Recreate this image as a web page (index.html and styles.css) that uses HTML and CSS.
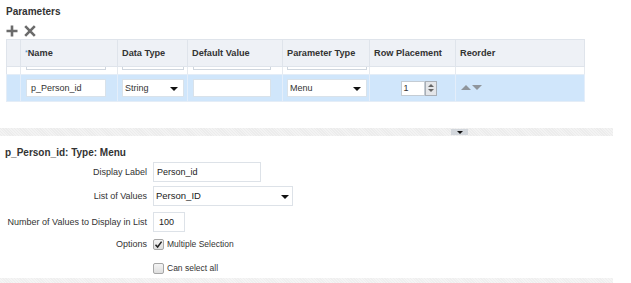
FILE: index.html
```html
<!DOCTYPE html>
<html>
<head>
<meta charset="utf-8">
<link rel="stylesheet" href="styles.css">
</head>
<body>
<div class="params">
  <div class="title">Parameters</div>
  <div class="tools">
    <svg class="ico" width="12" height="12" viewBox="0 0 12 12"><path d="M6 0.5V11.5M0.5 6H11.5" stroke="#6b6b6b" stroke-width="2.6"/></svg>
    <svg class="ico" width="12" height="12" viewBox="0 0 12 12"><path d="M1.2 1.2L10.8 10.8M10.8 1.2L1.2 10.8" stroke="#6b6b6b" stroke-width="2.6"/></svg>
  </div>
  <div class="grid">
    <div class="hc first"></div>
    <div class="hc"><span class="req">*</span>Name</div>
    <div class="hc">Data Type</div>
    <div class="hc">Default Value</div>
    <div class="hc">Parameter Type</div>
    <div class="hc">Row Placement</div>
    <div class="hc">Reorder</div>

    <div class="sc first"></div>
    <div class="sc"><div class="stub w-name"></div></div>
    <div class="sc"><div class="stub w-type"></div></div>
    <div class="sc"><div class="stub w-def"></div></div>
    <div class="sc"><div class="stub w-ptype"></div></div>
    <div class="sc"></div>
    <div class="sc"></div>

    <div class="rc first"></div>
    <div class="rc"><div class="inp w-name">p_Person_id</div></div>
    <div class="rc"><div class="inp sel w-type">String<span class="arr"></span></div></div>
    <div class="rc"><div class="inp w-def"></div></div>
    <div class="rc"><div class="inp sel w-ptype">Menu<span class="arr"></span></div></div>
    <div class="rc center"><div class="spin"><div class="spinval">1</div><div class="spinbtn"><span class="su"></span><span class="sd"></span></div></div></div>
    <div class="rc"><div class="reorder"><span class="up"></span><span class="down"></span></div></div>
  </div>
</div>

<div class="splitter"><div class="handle"><span class="harr"></span></div></div>

<div class="details">
  <div class="dtitle">p_Person_id: Type: Menu</div>
  <div class="frow r1"><div class="lbl">Display Label</div><div class="field f-label">Person_id</div></div>
  <div class="frow r2"><div class="lbl">List of Values</div><div class="field f-lov">Person_ID<span class="arr"></span></div></div>
  <div class="frow r3"><div class="lbl">Number of Values to Display in List</div><div class="field f-num">100</div></div>
  <div class="frow r4"><div class="lbl">Options</div><div class="chk"><span class="cb"><svg width="9" height="9" viewBox="0 0 9 9"><path d="M1.5 4.8L3.6 7L7.6 1.6" stroke="#222" stroke-width="1.5" fill="none"/></svg></span>Multiple Selection</div></div>
  <div class="frow r5"><div class="lbl"></div><div class="chk"><span class="cb"></span>Can select all</div></div>
</div>
<div class="bottombar"></div>
</body>
</html>
```
FILE: styles.css
```css
* { box-sizing: border-box; }
html, body { margin: 0; padding: 0; background: #fff; }
body { font-family: "Liberation Sans", Arial, sans-serif; color: #333; width: 631px; height: 283px; overflow: hidden; }

.params { padding: 6px 0 0 6px; }
.title { font-size: 10px; font-weight: bold; line-height: 12px; height: 12px; color: #333; }
.tools { display: flex; gap: 6px; margin-top: 7px; height: 12px; }
.ico { display: block; }

.grid {
  margin-top: 2px;
  display: grid;
  grid-template-columns: 15px 97px 70px 95px 87px 86px 129px;
  grid-template-rows: 28px 7px 28px;
  width: 579px;
}
.hc {
  background: #eef1f6;
  border-top: 1px solid #dfe4eb;
  border-bottom: 1px solid #dfe4eb;
  border-right: 1px solid #dfe4eb;
  font-size: 9.2px;
  font-weight: bold;
  color: #333;
  padding-left: 4px;
  display: flex;
  align-items: center;
  padding-bottom: 1px;
}
.hc.first, .sc.first, .rc.first { border-left: 1px solid #dfe4eb; }
.req { color: #3b8bd0; font-size: 7px; font-weight: normal; align-self: flex-start; margin-top: 9px; }
.sc { background: #fff; border-right: 1px solid #e6eaef; padding-left: 4px; }
.stub { height: 3px; border: 1px solid #cfd6de; border-top: none; background: #fff; }
.rc {
  background: #d0e6fb;
  border-right: 1px solid #e4eefa;
  border-bottom: 1px solid #e4edf7;
  border-top: 1px solid #e4edf7;
  padding-left: 4px;
  display: flex;
  align-items: center;
}
.rc.first { border-left: 1px solid #e4edf7; }
.rc.center { justify-content: center; padding-left: 0; padding-right: 4px; }
.w-name { width: 80px; margin-left: 1px; }
.w-type { width: 62px; }
.w-def { width: 78px; margin-left: 1px; }
.w-ptype { width: 80px; }
.inp {
  height: 18px;
  background: #fff;
  border: 1px solid #d9e2ea;
  font-size: 9px;
  color: #333;
  line-height: 16px;
  padding-left: 4px;
  position: relative;
}
.sel { padding-left: 2px; }
.arr {
  position: absolute;
  right: 5px;
  top: 7px;
  width: 0; height: 0;
  border-left: 4px solid transparent;
  border-right: 4px solid transparent;
  border-top: 4px solid #111;
}
.spin { display: flex; height: 15px; margin-left: 16px; }
.spinval { width: 24px; height: 15px; background: #fff; border: 1px solid #c4ccd4; font-size: 9px; line-height: 13px; padding-left: 2px; }
.spinbtn { width: 12px; height: 15px; background: #e4e6e9; border: 1px solid #a9afb6; display: flex; flex-direction: column; align-items: center; justify-content: center; gap: 2px; }
.su, .sd { width: 0; height: 0; border-left: 3px solid transparent; border-right: 3px solid transparent; }
.su { border-bottom: 3px solid #666; }
.sd { border-top: 3px solid #666; }
.reorder { display: flex; gap: 1px; margin-left: 1px; margin-top: -1px; }
.up, .down { width: 0; height: 0; border-left: 5px solid transparent; border-right: 5px solid transparent; }
.up { border-bottom: 5px solid #8f959c; }
.down { border-top: 5px solid #8f959c; }

.splitter {
  margin-top: 26px;
  width: 613px;
  height: 8px;
  background-color: #ececec;
  background-image: repeating-linear-gradient(45deg, rgba(255,255,255,0.35) 0 1px, transparent 1px 2px);
  display: flex;
}
.handle { margin-left: 451px; width: 17px; height: 6px; margin-top: 1px; background: #d3d7dc; display: flex; justify-content: center; align-items: center; }
.harr { width: 0; height: 0; border-left: 3px solid transparent; border-right: 3px solid transparent; border-top: 3px solid #111; }

.details { padding-top: 11px; }
.dtitle { font-size: 10px; font-weight: bold; line-height: 12px; padding-left: 5px; color: #333; }
.frow { display: flex; align-items: center; }
.lbl { width: 147px; text-align: right; font-size: 9px; color: #333; margin-right: 6px; white-space: nowrap; }
.r1 { margin-top: 3px; height: 20px; }
.r2 { margin-top: 4px; height: 20px; }
.r3 { margin-top: 6px; height: 20px; }
.r4 { margin-top: 4px; height: 16px; }
.r5 { margin-top: 8px; height: 16px; }
.field {
  height: 20px;
  background: #fff;
  border: 1px solid #dde2e8;
  font-size: 9px;
  color: #222;
  line-height: 18px;
  padding-left: 3px;
  position: relative;
}
.f-label { width: 108px; }
.f-lov { width: 140px; font-size: 9.5px; padding-left: 2px; }
.f-lov .arr { right: 3px; top: 8px; }
.f-num { width: 32px; padding-left: 5px; }
.chk { display: flex; align-items: center; font-size: 8.5px; color: #333; }
.cb {
  width: 11px; height: 11px;
  border: 1px solid #a6a6a6;
  border-radius: 2px;
  background: linear-gradient(#f4f4f4, #dedede);
  margin-right: 3px;
  display: flex; align-items: center; justify-content: center;
}
.cb svg { display: block; }
.bottombar {
  margin-top: 2px;
  width: 613px;
  height: 8px;
  background-color: #efefef;
  background-image: repeating-linear-gradient(45deg, rgba(255,255,255,0.35) 0 1px, transparent 1px 2px);
}
```
